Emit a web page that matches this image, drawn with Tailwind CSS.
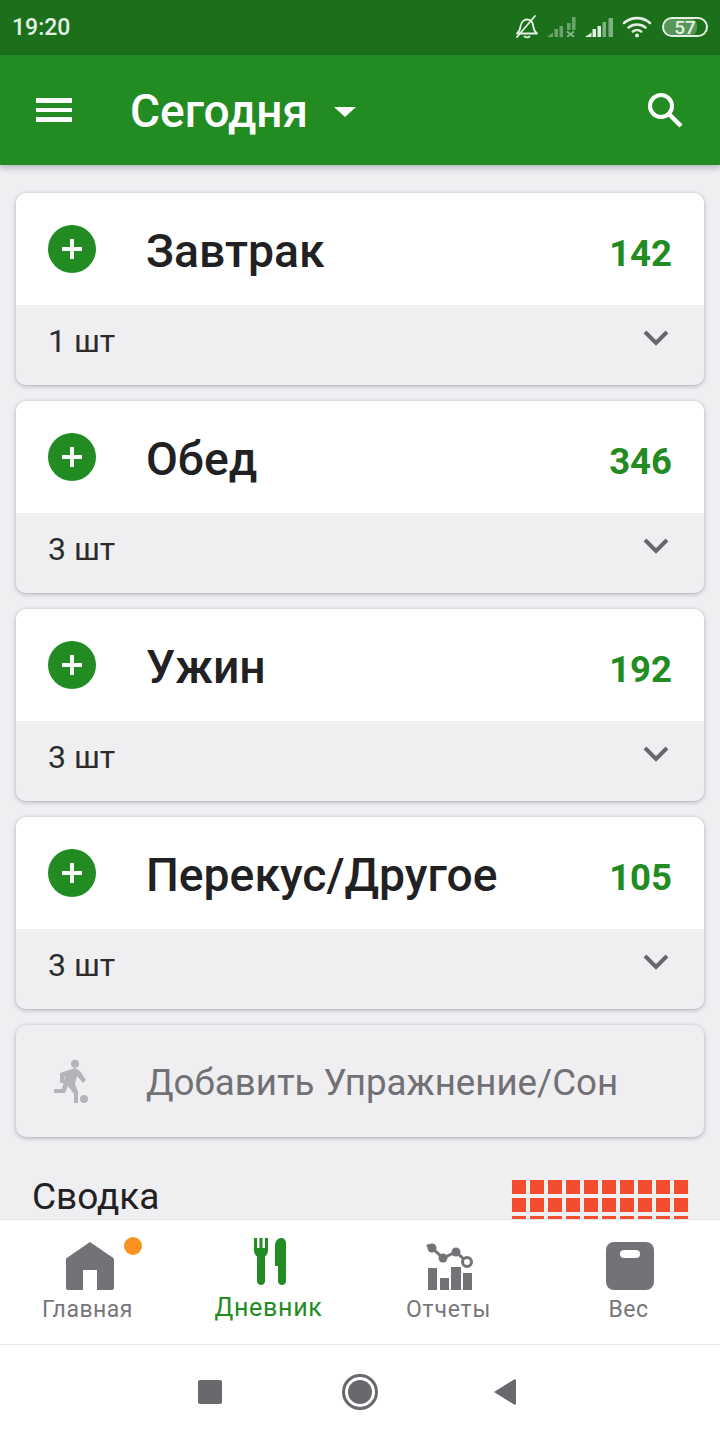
<!DOCTYPE html>
<html lang="ru">
<head>
<meta charset="UTF-8">
<meta name="viewport" content="width=device-width, initial-scale=1.0">
<title>Дневник</title>
<script src="https://cdn.jsdelivr.net/npm/@tailwindcss/browser@4"></script>
</head>
<body class="bg-[#efeef1]">
<div class="w-[720px] h-[1440px] flex flex-col overflow-hidden font-['Roboto',sans-serif]">

  <!-- status bar -->
  <div class="h-[55px] shrink-0 bg-[#1c701c] flex items-center pl-[12px] pr-[12px] text-[#e4f0e4]">
    <span class="text-[23px] font-medium leading-none mb-[1px]">19:20</span>
    <div class="ml-auto flex items-center mb-[1px]">
      <svg class="w-[24px] h-[24px]" viewBox="0 0 24 24" fill="none" stroke="#e4f0e4" stroke-width="1.800" stroke-linejoin="round" stroke-linecap="round"><path d="M2 18.500c2-1.500 3-3.500 3.500-7 .5-4 3-7 6.500-7 3.500 0 5.500 2.500 6 5.500.5 3.500 1.500 6.500 4 8.500z"/><path d="M9.500 21.500c1.500 1 3.500 1 5 0"/><path d="M2 22 L20 1"/></svg>
      <svg class="w-[29px] h-[20px] ml-[8px]" viewBox="0 0 29 20" fill="#e4f0e4"><g opacity=".4"><path d="M0 20l6-4.500V20zM7.500 12H11v8H7.500zM12.500 9H16v11h-3.500z"/><path d="M20 6h3.500v7H20zM25 0h3.500v13H25z"/></g><path opacity=".55" stroke="#e4f0e4" stroke-width="1.800" fill="none" d="M20 14.500l7 5.500M27 14.500l-7 5.500"/></svg>
      <svg class="w-[28px] h-[20px] ml-[9px]" viewBox="0 0 28 20" fill="#e4f0e4"><path d="M0 20l6.500-4.500V20zM7.500 12H11v8H7.500zM12.500 9H16v11h-3.500z"/><path opacity=".5" d="M17.500 5H21v15h-3.500zM23.500 1H28v19h-4.500z"/></svg>
      <svg class="w-[30px] h-[22px] ml-[9px]" viewBox="0 0 30 22" fill="none" stroke="#e4f0e4" stroke-width="2.600" stroke-linecap="round"><path d="M2 7c7.500-6.500 18.500-6.500 26 0"/><path d="M6.500 11.500c5-4 12-4 17 0"/><path d="M10.800 15.500c2.500-1.800 5.900-1.800 8.400 0"/><circle cx="15" cy="19.500" r="2" fill="#e4f0e4" stroke="none"/></svg>
      <div class="relative ml-[10px] w-[46px] h-[20px] rounded-full border-2 border-[#e4f0e4] flex items-center justify-center overflow-hidden">
        <div class="absolute left-0 top-0 bottom-0 w-[33px] bg-[#e4f0e4]/30 rounded-r-[6px]"></div>
        <span class="relative text-[19px] font-medium leading-none">57</span>
      </div>
    </div>
  </div>

  <!-- app bar -->
  <div class="relative z-10 h-[110px] shrink-0 bg-[#228b22] shadow-[0_3px_6px_rgba(60,50,70,0.3)] flex items-center pl-[36px] pr-[36px] text-white">
    <div class="w-[36px] flex flex-col gap-[5px]">
      <div class="h-[4.500px] bg-white"></div>
      <div class="h-[4.500px] bg-white"></div>
      <div class="h-[4.500px] bg-white"></div>
    </div>
    <span class="ml-[58px] text-[46px] leading-none font-medium mt-[2px]">Сегодня</span>
    <div class="ml-[26px] mt-[3px] w-0 h-0 border-l-[11px] border-r-[11px] border-t-[10px] border-l-transparent border-r-transparent border-t-white"></div>
    <svg class="ml-auto w-[38px] h-[38px]" viewBox="0 0 38 38" fill="none" stroke="white" stroke-width="4"><circle cx="15" cy="15" r="11"/><path d="M23 23 L35 35" stroke-width="4.500"/></svg>
  </div>

  <!-- content -->
  <div class="flex-1 min-h-0 overflow-hidden px-[16px] pt-[28px]">
    <div class="flex flex-col gap-[16px]">

      <div class="rounded-[10px] overflow-hidden shadow-[0_1px_4px_rgba(50,40,60,0.35)]">
        <div class="h-[112px] bg-white flex pl-[32px] pr-[32px]">
          <div class="w-[48px] h-[48px] mt-[32px] rounded-full bg-[#228b22] flex items-center justify-center">
            <svg class="w-[20px] h-[20px]" viewBox="0 0 20 20" fill="white"><path d="M8 0h4v8h8v4h-8v8H8v-8H0V8h8z"/></svg>
          </div>
          <span class="ml-[50px] mt-[28px] text-[46.250px] leading-[60px] font-medium text-[#212124]">Завтрак</span>
          <span class="ml-auto mt-[39px] text-[36.500px] leading-[44px] font-bold text-[#228b22]">142</span>
        </div>
        <div class="h-[80px] bg-[#efeef1] flex items-center pl-[32px] pr-[35px]">
          <span class="text-[32px] leading-none text-[#2b2b2e] mb-[8px]">1 шт</span>
          <svg class="ml-auto mb-[15px] w-[26px] h-[18px]" viewBox="0 0 26 18" fill="none" stroke="#67666b" stroke-width="4"><path d="M2 3 L13 14 L24 3"/></svg>
        </div>
      </div>

      <div class="rounded-[10px] overflow-hidden shadow-[0_1px_4px_rgba(50,40,60,0.35)]">
        <div class="h-[112px] bg-white flex pl-[32px] pr-[32px]">
          <div class="w-[48px] h-[48px] mt-[32px] rounded-full bg-[#228b22] flex items-center justify-center">
            <svg class="w-[20px] h-[20px]" viewBox="0 0 20 20" fill="white"><path d="M8 0h4v8h8v4h-8v8H8v-8H0V8h8z"/></svg>
          </div>
          <span class="ml-[50px] mt-[28px] text-[46.250px] leading-[60px] font-medium text-[#212124]">Обед</span>
          <span class="ml-auto mt-[39px] text-[36.500px] leading-[44px] font-bold text-[#228b22]">346</span>
        </div>
        <div class="h-[80px] bg-[#efeef1] flex items-center pl-[32px] pr-[35px]">
          <span class="text-[32px] leading-none text-[#2b2b2e] mb-[8px]">3 шт</span>
          <svg class="ml-auto mb-[15px] w-[26px] h-[18px]" viewBox="0 0 26 18" fill="none" stroke="#67666b" stroke-width="4"><path d="M2 3 L13 14 L24 3"/></svg>
        </div>
      </div>

      <div class="rounded-[10px] overflow-hidden shadow-[0_1px_4px_rgba(50,40,60,0.35)]">
        <div class="h-[112px] bg-white flex pl-[32px] pr-[32px]">
          <div class="w-[48px] h-[48px] mt-[32px] rounded-full bg-[#228b22] flex items-center justify-center">
            <svg class="w-[20px] h-[20px]" viewBox="0 0 20 20" fill="white"><path d="M8 0h4v8h8v4h-8v8H8v-8H0V8h8z"/></svg>
          </div>
          <span class="ml-[50px] mt-[28px] text-[46.250px] leading-[60px] font-medium text-[#212124]">Ужин</span>
          <span class="ml-auto mt-[39px] text-[36.500px] leading-[44px] font-bold text-[#228b22]">192</span>
        </div>
        <div class="h-[80px] bg-[#efeef1] flex items-center pl-[32px] pr-[35px]">
          <span class="text-[32px] leading-none text-[#2b2b2e] mb-[8px]">3 шт</span>
          <svg class="ml-auto mb-[15px] w-[26px] h-[18px]" viewBox="0 0 26 18" fill="none" stroke="#67666b" stroke-width="4"><path d="M2 3 L13 14 L24 3"/></svg>
        </div>
      </div>

      <div class="rounded-[10px] overflow-hidden shadow-[0_1px_4px_rgba(50,40,60,0.35)]">
        <div class="h-[112px] bg-white flex pl-[32px] pr-[32px]">
          <div class="w-[48px] h-[48px] mt-[32px] rounded-full bg-[#228b22] flex items-center justify-center">
            <svg class="w-[20px] h-[20px]" viewBox="0 0 20 20" fill="white"><path d="M8 0h4v8h8v4h-8v8H8v-8H0V8h8z"/></svg>
          </div>
          <span class="ml-[50px] mt-[28px] text-[46.250px] leading-[60px] font-medium text-[#212124]">Перекус/Другое</span>
          <span class="ml-auto mt-[39px] text-[36.500px] leading-[44px] font-bold text-[#228b22]">105</span>
        </div>
        <div class="h-[80px] bg-[#efeef1] flex items-center pl-[32px] pr-[35px]">
          <span class="text-[32px] leading-none text-[#2b2b2e] mb-[8px]">3 шт</span>
          <svg class="ml-auto mb-[15px] w-[26px] h-[18px]" viewBox="0 0 26 18" fill="none" stroke="#67666b" stroke-width="4"><path d="M2 3 L13 14 L24 3"/></svg>
        </div>
      </div>

      <div class="h-[112px] rounded-[10px] bg-[#efeef1] shadow-[0_1px_4px_rgba(50,40,60,0.35)] flex items-center pl-[36px]">
        <svg class="w-[36px] h-[44px]" viewBox="0 0 36 44" fill="#b5b4b8"><circle cx="23" cy="4.700" r="4"/><path d="M8 14 L23 9 L28 12 L34 21 L31 24 L25 17 L23 25 L26 33 V44 H22 V35 L16 27 L13 34 H2 V30 H10 L13 17 L12 18 V24 H8 z"/><circle cx="32" cy="40" r="4"/></svg>
        <span class="ml-[58px] mt-[4px] text-[36.700px] leading-none text-[#717075]">Добавить Упражнение/Сон</span>
      </div>

      <!-- summary -->
      <div class="flex pl-[16px] pr-[16px] mt-[27px]">
        <span class="text-[37px] leading-[40px] text-[#212124] -mt-[3px]">Сводка</span>
        <div class="ml-auto grid grid-cols-10 gap-[4px]">
          <div class="w-[14px] h-[14px] bg-[#f44c2e]"></div><div class="w-[14px] h-[14px] bg-[#f44c2e]"></div><div class="w-[14px] h-[14px] bg-[#f44c2e]"></div><div class="w-[14px] h-[14px] bg-[#f44c2e]"></div><div class="w-[14px] h-[14px] bg-[#f44c2e]"></div><div class="w-[14px] h-[14px] bg-[#f44c2e]"></div><div class="w-[14px] h-[14px] bg-[#f44c2e]"></div><div class="w-[14px] h-[14px] bg-[#f44c2e]"></div><div class="w-[14px] h-[14px] bg-[#f44c2e]"></div><div class="w-[14px] h-[14px] bg-[#f44c2e]"></div>
          <div class="w-[14px] h-[14px] bg-[#f44c2e]"></div><div class="w-[14px] h-[14px] bg-[#f44c2e]"></div><div class="w-[14px] h-[14px] bg-[#f44c2e]"></div><div class="w-[14px] h-[14px] bg-[#f44c2e]"></div><div class="w-[14px] h-[14px] bg-[#f44c2e]"></div><div class="w-[14px] h-[14px] bg-[#f44c2e]"></div><div class="w-[14px] h-[14px] bg-[#f44c2e]"></div><div class="w-[14px] h-[14px] bg-[#f44c2e]"></div><div class="w-[14px] h-[14px] bg-[#f44c2e]"></div><div class="w-[14px] h-[14px] bg-[#f44c2e]"></div>
          <div class="w-[14px] h-[14px] bg-[#f44c2e]"></div><div class="w-[14px] h-[14px] bg-[#f44c2e]"></div><div class="w-[14px] h-[14px] bg-[#f44c2e]"></div><div class="w-[14px] h-[14px] bg-[#f44c2e]"></div><div class="w-[14px] h-[14px] bg-[#f44c2e]"></div><div class="w-[14px] h-[14px] bg-[#f44c2e]"></div><div class="w-[14px] h-[14px] bg-[#f44c2e]"></div><div class="w-[14px] h-[14px] bg-[#f44c2e]"></div><div class="w-[14px] h-[14px] bg-[#f44c2e]"></div><div class="w-[14px] h-[14px] bg-[#f44c2e]"></div>
        </div>
      </div>
    </div>
  </div>

  <!-- bottom nav -->
  <div class="h-[125px] shrink-0 bg-white border-t border-[#e4e3e6] grid grid-cols-4 text-center">
    <div class="flex flex-col items-center pt-[22px]">
      <div class="relative h-[48px] w-[48px]">
        <svg class="w-[48px] h-[48px]" viewBox="0 0 48 48" fill="#737277"><path d="M24 0 L48 16.500 V46 a2 2 0 0 1-2 2 H31 V28 H17 V48 H2 a2 2 0 0 1-2-2 V16.500 z"/></svg>
        <div class="absolute left-[58px] -top-[5px] w-[18px] h-[18px] rounded-full bg-[#f7931e]"></div>
      </div>
      <span class="-ml-[5px] mt-[7px] text-[23px] leading-[26px] text-[#77767b] tracking-[0.5px]">Главная</span>
    </div>
    <div class="flex flex-col items-center pt-[18px]">
      <svg class="w-[32px] h-[47px]" viewBox="0 0 32 47" fill="#228b22"><path d="M0 0h3v10h2.500V0h3v10H11V0h3v12c0 3-1 5-3 6.500V43c0 5.300-8 5.300-8 0V18.500C1 17 0 15 0 12z"/><path d="M21 8c0-5 3-8 6-8 3 0 5 2 5 5v38c0 5.300-8 5.300-8 0V28h-3z"/></svg>
      <span class="-ml-[3px] mt-[9px] text-[25px] leading-[28px] text-[#228b22] tracking-[0.7px]">Дневник</span>
    </div>
    <div class="flex flex-col items-center pt-[21px]">
      <svg class="w-[50px] h-[50px]" viewBox="0 0 50 50" fill="#737277"><path d="M3 27h9v22H3zM15 37h9v12h-9zM26 26h10v23H26zM38 32h9v17h-9z"/><path d="M2 4 L7 7 L18 17 L31 11 L42 21" fill="none" stroke="#737277" stroke-width="3"/><circle cx="7" cy="7" r="4.500"/><circle cx="18" cy="17" r="4.500"/><circle cx="31" cy="11" r="4.500"/><circle cx="42" cy="21" r="4.500" fill="white" stroke="#737277" stroke-width="3"/></svg>
      <span class="-ml-[3px] mt-[6px] text-[23px] leading-[26px] text-[#77767b] tracking-[0.8px]">Отчеты</span>
    </div>
    <div class="flex flex-col items-center pt-[22px]">
      <div class="w-[48px] h-[48px] rounded-[8px] bg-[#737277] flex justify-center pt-[8px]">
        <div class="w-[20px] h-[8px] rounded-full bg-white"></div>
      </div>
      <span class="-ml-[3px] mt-[7px] text-[23px] leading-[26px] text-[#77767b] tracking-[0.5px]">Вес</span>
    </div>
  </div>

  <!-- android nav -->
  <div class="h-[96px] shrink-0 bg-white border-t border-[#e9e8eb] flex items-center pb-[2px] relative">
    <div class="ml-[198px] w-[24px] h-[24px] rounded-[2px] bg-[#69686d]"></div>
    <div class="ml-[120px] w-[36px] h-[36px] rounded-full border-[3px] border-[#69686d] flex items-center justify-center">
      <div class="w-[24px] h-[24px] rounded-full bg-[#69686d]"></div>
    </div>
    <svg class="ml-[115px] w-[24px] h-[28px]" viewBox="0 0 24 28" fill="#69686d"><path d="M1 14 L21 1.500 Q23 .500 23 3 V25 Q23 27.500 21 26.500 z"/></svg>
  </div>
</div>
</body>
</html>
